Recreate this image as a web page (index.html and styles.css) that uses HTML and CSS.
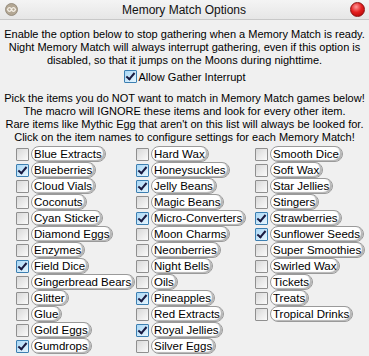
FILE: index.html
```html
<!DOCTYPE html>
<html lang="en">
<head>
    <meta charset="UTF-8">
    <title>Memory Match Options</title>
    <link rel="stylesheet" href="styles.css">
</head>
<body>
    <div class="window">
        <div class="titlebar">
            <span class="app-icon">
                <svg width="13" height="13" viewBox="0 0 13 13">
                    <circle cx="6.5" cy="6.5" r="6" fill="#b3a794" stroke="#8a8070" stroke-width="0.8"/>
                    <path d="M2.5 6.5 C3.5 4 5.5 4 6.5 6.5 C7.5 9 9.5 9 10.5 6.5 C9.5 4 7.5 4 6.5 6.5 C5.5 9 3.5 9 2.5 6.5 Z" fill="none" stroke="#f4efe6" stroke-width="1.3"/>
                </svg>
            </span>
            <span class="title">Memory Match Options</span>
            <span class="close-btn"></span>
        </div>
        <div class="content">
            <p class="intro">
                Enable the option below to stop gathering when a Memory Match is ready.<br>
                Night Memory Match will always interrupt gathering, even if this option is<br>
                disabled, so that it jumps on the Moons during nighttime.
            </p>
            <label class="interrupt">
                <span class="box checked"></span>Allow Gather Interrupt
            </label>
            <p class="intro">
                Pick the items you do NOT want to match in Memory Match games below!<br>
                The macro will IGNORE these items and look for every other item.<br>
                Rare items like Mythic Egg that aren't on this list will always be looked for.<br>
                Click on the item names to configure settings for each Memory Match!
            </p>
            <div class="items" id="items"></div>
        </div>
    </div>
    <script>
        const columns = [
            [['Blue Extracts', 0], ['Blueberries', 1], ['Cloud Vials', 0], ['Coconuts', 0], ['Cyan Sticker', 0],
             ['Diamond Eggs', 0], ['Enzymes', 0], ['Field Dice', 1], ['Gingerbread Bears', 0], ['Glitter', 0],
             ['Glue', 0], ['Gold Eggs', 0], ['Gumdrops', 1]],
            [['Hard Wax', 0], ['Honeysuckles', 1], ['Jelly Beans', 1], ['Magic Beans', 0], ['Micro-Converters', 1],
             ['Moon Charms', 0], ['Neonberries', 0], ['Night Bells', 0], ['Oils', 0], ['Pineapples', 1],
             ['Red Extracts', 0], ['Royal Jellies', 1], ['Silver Eggs', 0]],
            [['Smooth Dice', 0], ['Soft Wax', 0], ['Star Jellies', 0], ['Stingers', 0], ['Strawberries', 1],
             ['Sunflower Seeds', 1], ['Super Smoothies', 0], ['Swirled Wax', 0], ['Tickets', 0], ['Treats', 0],
             ['Tropical Drinks', 0]]
        ];
        const items = document.getElementById('items');

        columns.forEach(col => {
            const column = document.createElement('div');
            column.className = 'column';
            col.forEach(([name, checked]) => {
                const row = document.createElement('div');
                row.className = 'item';
                const box = document.createElement('span');
                box.className = checked ? 'box checked' : 'box';
                box.addEventListener('click', () => box.classList.toggle('checked'));
                const pill = document.createElement('span');
                pill.className = 'pill';
                pill.textContent = name;
                row.appendChild(box);
                row.appendChild(pill);
                column.appendChild(row);
            });
            items.appendChild(column);
        });
    </script>
</body>
</html>
```

FILE: styles.css
```css
body {
    margin: 0;
    font-family: "Liberation Sans", Arial, sans-serif;
    font-size: 11px;
    color: #000;
    background: #f0f0f0;
}
.window {
    width: 369px;
    height: 356px;
    background: #f0f0f0;
    overflow: hidden;
}
.titlebar {
    height: 20px;
    display: flex;
    align-items: center;
    padding: 0 4px 0 5px;
    background: linear-gradient(#f4f4f4, #e6e6e6);
    border-bottom: 1px solid #c8c8c8;
    box-sizing: border-box;
}
.app-icon {
    width: 13px;
    height: 13px;
    display: flex;
}
.title {
    flex: 1;
    text-align: center;
    font-size: 12px;
    color: #111;
}
.close-btn {
    width: 13px;
    height: 13px;
    border-radius: 50%;
    background: radial-gradient(circle at 40% 30%, #ff9a9a 0, #e52020 45%, #a80000 100%);
    border: 1px solid #8c1010;
}
.content {
    padding: 8px 0 0 0;
}
.intro {
    margin: 0;
    text-align: center;
    line-height: 13px;
}
.interrupt {
    display: flex;
    justify-content: center;
    align-items: center;
    gap: 2px;
    height: 13px;
    margin: 3px 0 9px 0;
}
.box {
    width: 11px;
    height: 11px;
    border: 1px solid #8f8f8f;
    border-radius: 1px;
    background: linear-gradient(135deg, #d8d8d8, #fbfbfb);
    position: relative;
    flex-shrink: 0;
}
.box.checked {
    border-color: #3c7fb1;
    background: linear-gradient(135deg, #a9d7f6, #e8f6fe);
}
.box.checked::after {
    content: "";
    position: absolute;
    left: 3px;
    top: 0px;
    width: 3px;
    height: 7px;
    border: solid #1a1a40;
    border-width: 0 2px 2px 0;
    transform: rotate(40deg);
}
.items {
    display: grid;
    grid-template-columns: 120px 119px 1fr;
    padding: 2px 0 0 16px;
}
.item {
    display: flex;
    align-items: center;
    gap: 2px;
    height: 16px;
}
.pill {
    height: 14px;
    line-height: 14px;
    font-size: 11.5px;
    padding: 0 3px 0 2px;
    background: #fff;
    border: 1px solid #9a9a9a;
    border-radius: 8px;
    box-shadow: inset -2px -1px 1px #b4b4b4;
    cursor: pointer;
}
```
